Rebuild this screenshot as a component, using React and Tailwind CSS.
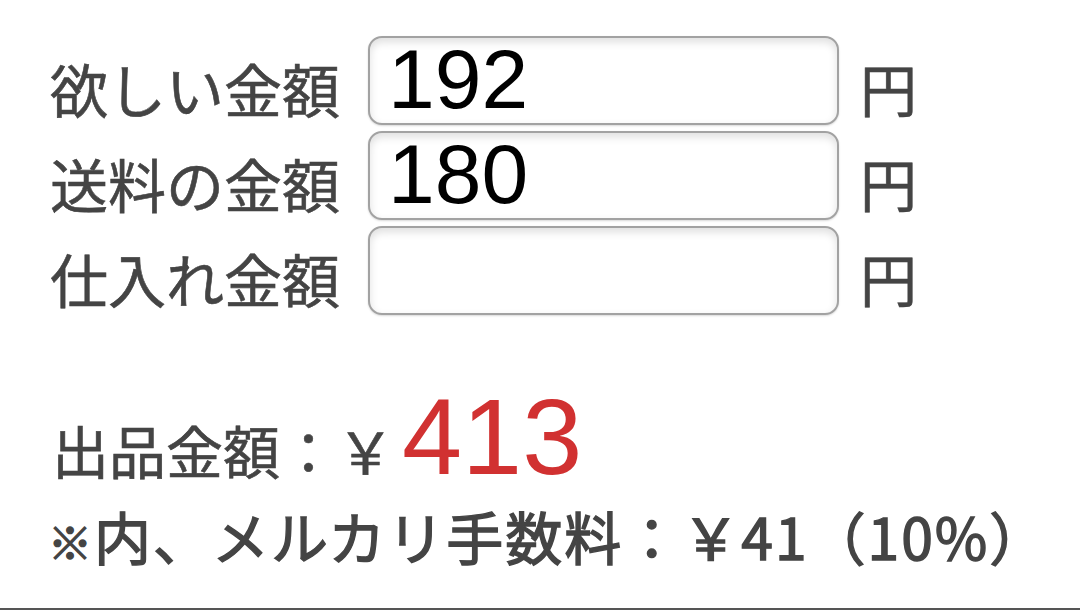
const rows = [
  { label: "欲しい金額", value: "192" },
  { label: "送料の金額", value: "180" },
  { label: "仕入れ金額", value: "" },
];

function AmountRow({ label, value }) {
  return (
    <div className="flex items-center h-[89px]">
      <div className="w-[318px] pt-[14px] text-[58px] leading-none text-[#444] [-webkit-text-stroke:0.6px_#444]">
        {label}
      </div>
      <input
        type="text"
        defaultValue={value}
        className="h-[89px] w-[471px] rounded-[14px] border-2 border-[#a2a2a2] bg-white px-[18px] pb-[4px] font-['Liberation_Sans',Arial,sans-serif] text-[84px] text-black shadow-[inset_0_4px_8px_rgba(0,0,0,0.13),0_1px_2px_rgba(0,0,0,0.15)] outline-none"
      />
      <div className="ml-[21px] pt-[14px] text-[57px] leading-none text-[#444] [-webkit-text-stroke:0.6px_#444]">
        円
      </div>
    </div>
  );
}

export default function App() {
  return (
    <div className="flex h-[610px] w-[1080px] flex-col border-b-2 border-[#555] bg-white font-['Noto_Sans_CJK_JP','Noto_Sans',sans-serif]">
      <div className="flex flex-col gap-[6px] pl-[50px] pt-[36px]">
        {rows.map((r) => (
          <AmountRow key={r.label} {...r} />
        ))}
      </div>

      <div className="mt-[68px] pl-[52px]">
        <div className="flex items-baseline text-[#444]">
          <span className="text-[57px] leading-none [-webkit-text-stroke:0.6px_#444]">出品金額：￥</span>
          <span className="ml-[8px] font-['Liberation_Sans',Arial,sans-serif] text-[108px] leading-none text-[#d13131]">
            413
          </span>
        </div>
        <div className="-ml-[4px] mt-[16px] text-[57px] leading-none tracking-[2px] text-[#444] [-webkit-text-stroke:1.4px_#444]">
          <span className="text-[44px]">※</span>内、メルカリ手数料：￥41（10%）
        </div>
      </div>
    </div>
  );
}
